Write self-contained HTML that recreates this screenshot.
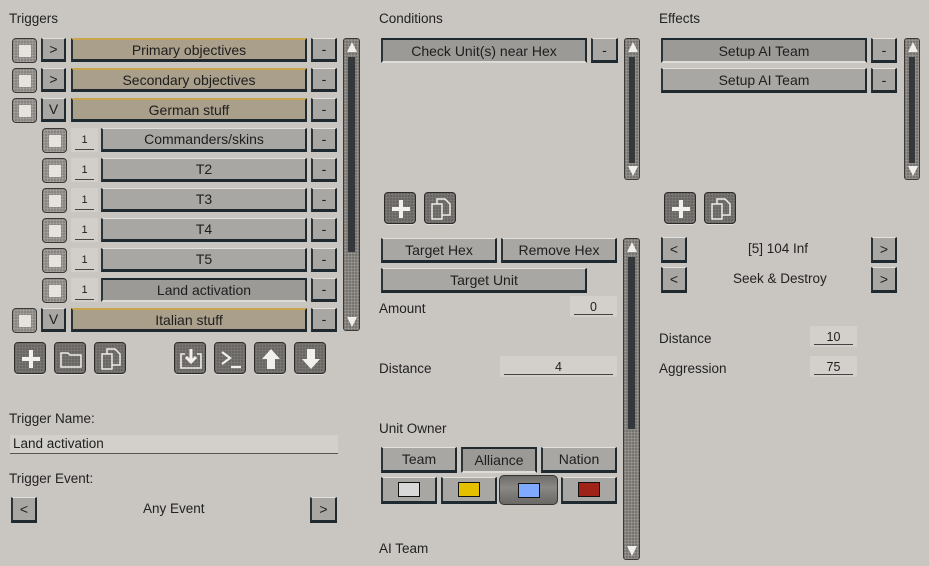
<!DOCTYPE html>
<html><head><meta charset="utf-8">
<style>
*{box-sizing:border-box;margin:0;padding:0}
body{width:929px;height:566px;background:#c9c6c2;font-family:"Liberation Sans","DejaVu Sans",sans-serif;font-size:13px;color:#1e1e1e;position:relative;overflow:hidden}
.a{position:absolute}
.lbl{position:absolute;font-size:13.5px;color:#222}
.b{position:absolute;background:#a9a7a3;border-top:1px solid #e2e0da;border-left:2px solid #2a3338;border-right:2px solid #1e2a30;border-bottom:3px solid #1e2a30;display:flex;align-items:center;justify-content:center;font-size:14px;color:#1e1e1e}
.p{background:#9c9a96;border-top:2px solid #1e2a30;border-bottom:2px solid #dedcd6}
.t{background:#a99f8a;border-top:2px solid #c8a650}
.cb{position:absolute;width:25px;height:25px;border-radius:4px;background:#7d7a77;background-image:radial-gradient(#a5a29e 1px,transparent 1.5px);background-size:3px 3px;border:1px solid #3a3836}
.cb::after{content:"";position:absolute;left:6px;top:6px;width:12px;height:12px;background:#e6e3de}
.num{position:absolute;background:#d2cfca;display:flex;align-items:center;justify-content:center;font-size:11px}
.num::after{content:"";position:absolute;left:4px;right:4px;bottom:2px;height:1px;background:#444}
.fld{position:absolute;background:#d3d0cb;display:flex;align-items:center;justify-content:center;font-size:12.5px}
.fld::after{content:"";position:absolute;left:4px;right:4px;bottom:2px;height:1px;background:#444}
.sb{position:absolute;border-radius:3px;background:#6a6865;background-image:radial-gradient(#9a9793 1px,transparent 1.5px);background-size:3px 3px;border:1px solid #3c3a38}
.sb .tr{position:absolute;left:4px;right:4px;background:#35383a}
.sb .up,.sb .dn{position:absolute;left:3px;width:0;height:0;border-left:5px solid transparent;border-right:5px solid transparent}
.sb .up{top:3px;border-bottom:10px solid #f0eeea}
.sb .dn{bottom:3px;border-top:10px solid #f0eeea}
.ib{position:absolute;width:32px;height:32px;border-radius:4px;background:#5e5c59;background-image:radial-gradient(#7c7976 1px,transparent 1.6px);background-size:3px 3px;border:1px solid #2e2c2a;box-shadow:0 1px 0 #ddd}
.ib svg{position:absolute;left:3px;top:3px}
</style></head><body>

<div class="lbl" style="left:9px;top:11px">Triggers</div>
<div class="lbl" style="left:379px;top:11px">Conditions</div>
<div class="lbl" style="left:659px;top:11px">Effects</div>

<div class="cb" style="left:12px;top:38px"></div><div class="b" style="left:41px;top:38px;width:25px;height:24px">&gt;</div><div class="b t" style="left:71px;top:38px;width:236px;height:24px">Primary objectives</div><div class="b" style="left:311px;top:38px;width:26px;height:24px">-</div>
<div class="cb" style="left:12px;top:68px"></div><div class="b" style="left:41px;top:68px;width:25px;height:24px">&gt;</div><div class="b t" style="left:71px;top:68px;width:236px;height:24px">Secondary objectives</div><div class="b" style="left:311px;top:68px;width:26px;height:24px">-</div>
<div class="cb" style="left:12px;top:98px"></div><div class="b" style="left:41px;top:98px;width:25px;height:24px">V</div><div class="b t" style="left:71px;top:98px;width:236px;height:24px">German stuff</div><div class="b" style="left:311px;top:98px;width:26px;height:24px">-</div>

<div class="cb" style="left:42px;top:128px"></div><div class="num" style="left:71px;top:128px;width:27px;height:24px">1</div><div class="b" style="left:101px;top:128px;width:206px;height:24px">Commanders/skins</div><div class="b" style="left:311px;top:128px;width:26px;height:24px">-</div>
<div class="cb" style="left:42px;top:158px"></div><div class="num" style="left:71px;top:158px;width:27px;height:24px">1</div><div class="b" style="left:101px;top:158px;width:206px;height:24px">T2</div><div class="b" style="left:311px;top:158px;width:26px;height:24px">-</div>
<div class="cb" style="left:42px;top:188px"></div><div class="num" style="left:71px;top:188px;width:27px;height:24px">1</div><div class="b" style="left:101px;top:188px;width:206px;height:24px">T3</div><div class="b" style="left:311px;top:188px;width:26px;height:24px">-</div>
<div class="cb" style="left:42px;top:218px"></div><div class="num" style="left:71px;top:218px;width:27px;height:24px">1</div><div class="b" style="left:101px;top:218px;width:206px;height:24px">T4</div><div class="b" style="left:311px;top:218px;width:26px;height:24px">-</div>
<div class="cb" style="left:42px;top:248px"></div><div class="num" style="left:71px;top:248px;width:27px;height:24px">1</div><div class="b" style="left:101px;top:248px;width:206px;height:24px">T5</div><div class="b" style="left:311px;top:248px;width:26px;height:24px">-</div>
<div class="cb" style="left:42px;top:278px"></div><div class="num" style="left:71px;top:278px;width:27px;height:24px">1</div><div class="b p" style="left:101px;top:278px;width:206px;height:24px">Land activation</div><div class="b" style="left:311px;top:278px;width:26px;height:24px">-</div>
<div class="cb" style="left:12px;top:308px"></div><div class="b" style="left:41px;top:308px;width:25px;height:24px">V</div><div class="b t" style="left:71px;top:308px;width:236px;height:24px">Italian stuff</div><div class="b" style="left:311px;top:308px;width:26px;height:24px">-</div>

<div class="sb" style="left:343px;top:38px;width:17px;height:293px"><div class="tr" style="top:18px;height:195px"></div><div class="up"></div><div class="dn"></div></div>

<div class="ib" style="left:14px;top:342px"><svg width="26" height="26" viewBox="0 0 26 26"><path d="M13 4V22M4 13H22" stroke="#f2f0ec" stroke-width="4"/></svg></div>
<div class="ib" style="left:54px;top:342px"><svg width="26" height="26" viewBox="0 0 26 26"><path d="M3 7H10L12 9H23V21H3Z" fill="none" stroke="#eeece8" stroke-width="1.5"/></svg></div>
<div class="ib" style="left:94px;top:342px"><svg width="26" height="26" viewBox="0 0 26 26"><path d="M4 8H14V23H4ZM9 8V3H17L22 8V19H14" fill="none" stroke="#eeece8" stroke-width="1.5"/></svg></div>
<div class="ib" style="left:174px;top:342px"><svg width="26" height="26" viewBox="0 0 26 26"><path d="M7 8H3V22H23V8H19" fill="none" stroke="#eeece8" stroke-width="1.6"/><path d="M13 3V15M8 11L13 16L18 11" fill="none" stroke="#f2f0ec" stroke-width="3"/></svg></div>
<div class="ib" style="left:214px;top:342px"><svg width="26" height="26" viewBox="0 0 26 26"><path d="M4 6L12 12L4 18M13 21H23" fill="none" stroke="#f2f0ec" stroke-width="2.2"/></svg></div>
<div class="ib" style="left:254px;top:342px"><svg width="26" height="26" viewBox="0 0 26 26"><path d="M13 3L4 13H9V23H17V13H22Z" fill="#f2f0ec"/></svg></div>
<div class="ib" style="left:294px;top:342px"><svg width="26" height="26" viewBox="0 0 26 26"><path d="M13 23L4 13H9V3H17V13H22Z" fill="#f2f0ec"/></svg></div>

<div class="lbl" style="left:9px;top:411px">Trigger Name:</div>
<div class="a" style="left:10px;top:435px;width:328px;height:19px;background:#d3d0cb;padding-left:3px;font-size:13.5px;line-height:18px;border-bottom:1px solid #555">Land activation</div>
<div class="lbl" style="left:9px;top:471px">Trigger Event:</div>
<div class="b" style="left:11px;top:497px;width:26px;height:26px">&lt;</div>
<div class="lbl" style="left:143px;top:501px">Any Event</div>
<div class="b" style="left:310px;top:497px;width:27px;height:26px">&gt;</div>

<div class="b p" style="left:381px;top:38px;width:206px;height:25px">Check Unit(s) near Hex</div>
<div class="b" style="left:591px;top:38px;width:27px;height:25px">-</div>
<div class="sb" style="left:624px;top:38px;width:16px;height:142px"><div class="tr" style="top:18px;height:106px"></div><div class="up"></div><div class="dn"></div></div>
<div class="ib" style="left:384px;top:192px"><svg width="26" height="26" viewBox="0 0 26 26"><path d="M13 4V22M4 13H22" stroke="#f2f0ec" stroke-width="4"/></svg></div>
<div class="ib" style="left:424px;top:192px"><svg width="26" height="26" viewBox="0 0 26 26"><path d="M4 8H14V23H4ZM9 8V3H17L22 8V19H14" fill="none" stroke="#eeece8" stroke-width="1.5"/></svg></div>
<div class="b" style="left:381px;top:238px;width:116px;height:25px">Target Hex</div>
<div class="b" style="left:501px;top:238px;width:116px;height:25px">Remove Hex</div>
<div class="b" style="left:381px;top:268px;width:206px;height:25px">Target Unit</div>
<div class="sb" style="left:623px;top:238px;width:17px;height:322px"><div class="tr" style="top:18px;height:172px"></div><div class="up"></div><div class="dn"></div></div>
<div class="lbl" style="left:379px;top:301px">Amount</div>
<div class="fld" style="left:570px;top:296px;width:47px;height:21px">0</div>
<div class="lbl" style="left:379px;top:361px">Distance</div>
<div class="fld" style="left:500px;top:356px;width:117px;height:21px">4</div>
<div class="lbl" style="left:379px;top:421px">Unit Owner</div>
<div class="b" style="left:381px;top:447px;width:76px;height:26px">Team</div>
<div class="b p" style="left:461px;top:447px;width:76px;height:26px">Alliance</div>
<div class="b" style="left:541px;top:447px;width:76px;height:26px">Nation</div>
<div class="b" style="left:381px;top:477px;width:56px;height:27px"><span style="width:22px;height:15px;background:#d8d8d8;border:1px solid #111;display:block"></span></div>
<div class="b" style="left:441px;top:477px;width:56px;height:27px"><span style="width:22px;height:15px;background:#e5c000;border:1px solid #111;display:block"></span></div>
<div class="a" style="left:499px;top:475px;width:59px;height:30px;border-radius:5px;background:linear-gradient(#6e6c69,#8a8885 40%,#6a6865);border:1px solid #333;display:flex;align-items:center;justify-content:center"><span style="width:22px;height:15px;background:#80aaff;border:1px solid #111;display:block"></span></div>
<div class="b" style="left:561px;top:477px;width:56px;height:27px"><span style="width:22px;height:15px;background:#a0231a;border:1px solid #111;display:block"></span></div>
<div class="lbl" style="left:379px;top:541px">AI Team</div>

<div class="b p" style="left:661px;top:38px;width:206px;height:25px">Setup AI Team</div>
<div class="b" style="left:871px;top:38px;width:26px;height:25px">-</div>
<div class="b" style="left:661px;top:68px;width:206px;height:25px">Setup AI Team</div>
<div class="b" style="left:871px;top:68px;width:26px;height:25px">-</div>
<div class="sb" style="left:904px;top:38px;width:16px;height:142px"><div class="tr" style="top:18px;height:106px"></div><div class="up"></div><div class="dn"></div></div>
<div class="ib" style="left:664px;top:192px"><svg width="26" height="26" viewBox="0 0 26 26"><path d="M13 4V22M4 13H22" stroke="#f2f0ec" stroke-width="4"/></svg></div>
<div class="ib" style="left:704px;top:192px"><svg width="26" height="26" viewBox="0 0 26 26"><path d="M4 8H14V23H4ZM9 8V3H17L22 8V19H14" fill="none" stroke="#eeece8" stroke-width="1.5"/></svg></div>
<div class="b" style="left:661px;top:237px;width:26px;height:26px">&lt;</div>
<div class="lbl" style="left:748px;top:241px">[5] 104 Inf</div>
<div class="b" style="left:871px;top:237px;width:26px;height:26px">&gt;</div>
<div class="b" style="left:661px;top:267px;width:26px;height:26px">&lt;</div>
<div class="lbl" style="left:733px;top:271px">Seek &amp; Destroy</div>
<div class="b" style="left:871px;top:267px;width:26px;height:26px">&gt;</div>
<div class="lbl" style="left:659px;top:331px">Distance</div>
<div class="fld" style="left:810px;top:326px;width:47px;height:21px">10</div>
<div class="lbl" style="left:659px;top:361px">Aggression</div>
<div class="fld" style="left:810px;top:356px;width:47px;height:21px">75</div>

</body></html>
